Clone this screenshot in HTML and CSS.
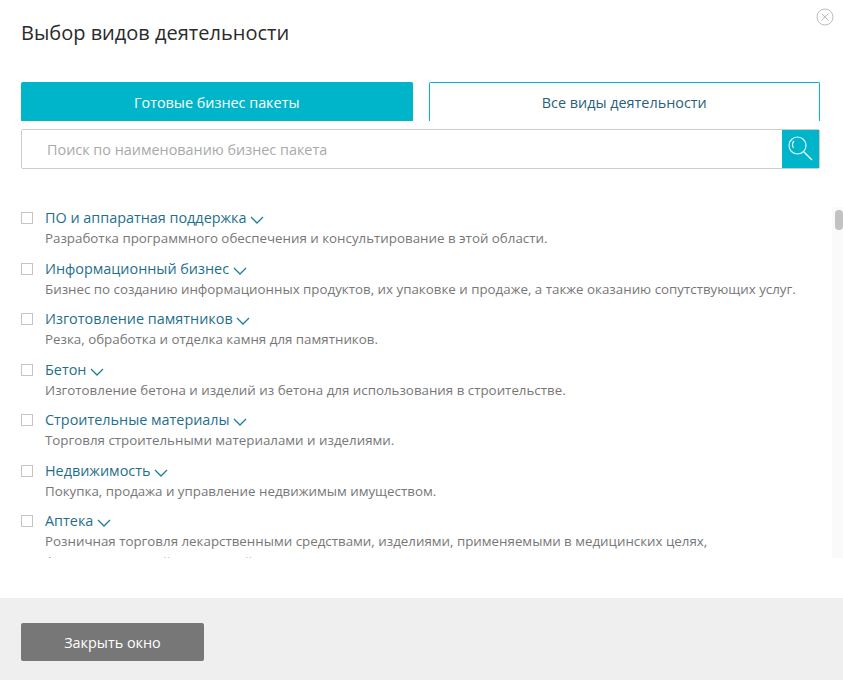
FILE: index.html
```html
<!DOCTYPE html>
<html lang="ru">
<head>
  <meta charset="UTF-8" />
  <title>Выбор видов деятельности</title>
  <link rel="stylesheet" href="styles.css">
</head>
<body>

<div class="modal">
  <!-- Шапка -->
  <div class="modal-head">
    <h1 class="modal-title">Выбор видов деятельности</h1>
    <button class="close-icon" aria-label="Закрыть">
      <svg width="18" height="18" viewBox="0 0 18 18" fill="none" stroke="#bdbdbd" stroke-width="1">
        <circle cx="9" cy="9" r="8"/>
        <path d="M5.5 5.5l7 7M12.5 5.5l-7 7"/>
      </svg>
    </button>
  </div>

  <!-- Вкладки -->
  <div class="tabs">
    <div class="tab tab-active">Готовые бизнес пакеты</div>
    <div class="tab">Все виды деятельности</div>
  </div>

  <!-- Поиск -->
  <div class="search">
    <input class="search-input" type="text" placeholder="Поиск по наименованию бизнес пакета" />
    <div class="search-btn">
      <svg width="28" height="28" viewBox="0 0 28 28" fill="none" stroke="#e6f7fa">
        <circle cx="10.5" cy="10.5" r="8.5" stroke-width="1.2"/>
        <path d="M17 17l8 8" stroke-width="1.4"/>
        <path d="M7 6a6 6 0 0 0-.5 7" stroke-width="1.2"/>
      </svg>
    </div>
  </div>

  <!-- Список -->
  <div class="list-wrap">
    <ul class="list">
      <li class="item">
        <span class="check"></span>
        <div class="item-body">
          <div class="item-name">ПО и аппаратная поддержка <svg class="chev" width="14" height="8" viewBox="0 0 14 8"><path d="M1 1l6 6 6-6"/></svg></div>
          <div class="item-desc">Разработка программного обеспечения и консультирование в этой области.</div>
        </div>
      </li>
      <li class="item">
        <span class="check"></span>
        <div class="item-body">
          <div class="item-name">Информационный бизнес <svg class="chev" width="14" height="8" viewBox="0 0 14 8"><path d="M1 1l6 6 6-6"/></svg></div>
          <div class="item-desc">Бизнес по созданию информационных продуктов, их упаковке и продаже, а также оказанию сопутствующих услуг.</div>
        </div>
      </li>
      <li class="item">
        <span class="check"></span>
        <div class="item-body">
          <div class="item-name">Изготовление памятников <svg class="chev" width="14" height="8" viewBox="0 0 14 8"><path d="M1 1l6 6 6-6"/></svg></div>
          <div class="item-desc">Резка, обработка и отделка камня для памятников.</div>
        </div>
      </li>
      <li class="item">
        <span class="check"></span>
        <div class="item-body">
          <div class="item-name">Бетон <svg class="chev" width="14" height="8" viewBox="0 0 14 8"><path d="M1 1l6 6 6-6"/></svg></div>
          <div class="item-desc">Изготовление бетона и изделий из бетона для использования в строительстве.</div>
        </div>
      </li>
      <li class="item">
        <span class="check"></span>
        <div class="item-body">
          <div class="item-name">Строительные материалы <svg class="chev" width="14" height="8" viewBox="0 0 14 8"><path d="M1 1l6 6 6-6"/></svg></div>
          <div class="item-desc">Торговля строительными материалами и изделиями.</div>
        </div>
      </li>
      <li class="item">
        <span class="check"></span>
        <div class="item-body">
          <div class="item-name">Недвижимость <svg class="chev" width="14" height="8" viewBox="0 0 14 8"><path d="M1 1l6 6 6-6"/></svg></div>
          <div class="item-desc">Покупка, продажа и управление недвижимым имуществом.</div>
        </div>
      </li>
      <li class="item">
        <span class="check"></span>
        <div class="item-body">
          <div class="item-name">Аптека <svg class="chev" width="14" height="8" viewBox="0 0 14 8"><path d="M1 1l6 6 6-6"/></svg></div>
          <div class="item-desc">Розничная торговля лекарственными средствами, изделиями, применяемыми в медицинских целях, фармацевтической продукцией.</div>
        </div>
      </li>
    </ul>
    <div class="scroll-track"><div class="scroll-thumb"></div></div>
  </div>

  <!-- Подвал -->
  <div class="modal-foot">
    <button class="close-btn">Закрыть окно</button>
  </div>
</div>

</body>
</html>
```

FILE: styles.css
```css
html, body {
  margin: 0;
  padding: 0;
  height: 100%;
  background: #fff;
  font-family: "Open Sans", sans-serif;
  overflow: hidden;
}

.modal {
  position: relative;
  height: 680px;
  display: flex;
  flex-direction: column;
}

/* Шапка */
.modal-head {
  height: 82px;
  box-sizing: border-box;
  padding: 19px 21px 0;
}

.modal-title {
  margin: 0;
  font-size: 20px;
  line-height: 28px;
  font-weight: 400;
  color: #2b2b2b;
}

.close-icon {
  position: absolute;
  top: 8px;
  right: 9px;
  width: 18px;
  height: 18px;
  padding: 0;
  border: none;
  background: none;
}

/* Вкладки */
.tabs {
  display: flex;
  gap: 16px;
  padding: 0 23px 0 21px;
}

.tab {
  flex: 1;
  height: 39px;
  box-sizing: border-box;
  border: 1px solid #00b5ca;
  border-bottom: none;
  border-radius: 2px 2px 0 0;
  text-align: center;
  font-size: 14.4px;
  line-height: 40px;
  color: #2a5f78;
}

.tab-active {
  background: #00b5ca;
  color: #fff;
}

/* Поиск */
.search {
  display: flex;
  height: 40px;
  box-sizing: border-box;
  margin: 8px 23px 0 21px;
  border: 1px solid #ccc;
  border-radius: 2px;
}

.search-input {
  flex: 1;
  border: none;
  outline: none;
  padding: 0 0 0 25px;
  font-family: "Open Sans", sans-serif;
  font-size: 14.4px;
  color: #333;
}

.search-input::placeholder {
  color: #a9a9a9;
  opacity: 1;
}

.search-btn {
  width: 37px;
  background: #00b5ca;
  display: flex;
  align-items: center;
  justify-content: center;
}

/* Список */
.list-wrap {
  position: relative;
  height: 351px;
  margin-top: 38px;
  overflow: hidden;
}

.list {
  list-style: none;
  margin: 0;
  padding: 1px 0 0 21px;
}

.item {
  display: flex;
  gap: 12px;
  height: 50.5px;
  width: 790px;
}

.check {
  flex: none;
  width: 10px;
  height: 10px;
  margin-top: 4px;
  border: 1px solid #c4c4c4;
}

.item-name {
  font-size: 14.4px;
  line-height: 20px;
  color: #1f6f8b;
}

.chev {
  fill: none;
  stroke: #1f7f99;
  stroke-width: 1.3;
  vertical-align: -1px;
}

.item-desc {
  font-size: 13.33px;
  line-height: 21px;
  color: #777;
}

.scroll-track {
  position: absolute;
  top: 0;
  right: 0;
  bottom: 0;
  width: 11px;
  background: #fafafa;
}

.scroll-thumb {
  width: 8px;
  height: 20px;
  margin: 3px 0 0 3px;
  border-radius: 4px;
  background: #c2c2c2;
}

/* Подвал */
.modal-foot {
  margin-top: auto;
  height: 82px;
  box-sizing: border-box;
  padding-top: 25px;
  background: #efefef;
}

.close-btn {
  display: block;
  width: 183px;
  height: 38px;
  margin-left: 21px;
  border: none;
  border-radius: 2px;
  background: #777;
  color: #fff;
  font-family: "Open Sans", sans-serif;
  font-size: 14.4px;
}
```
